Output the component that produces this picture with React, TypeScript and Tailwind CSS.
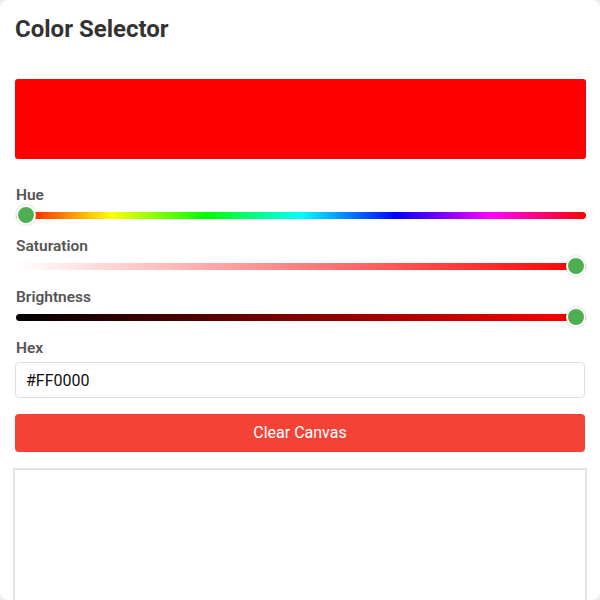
import { useState } from 'react';

const font = { fontFamily: 'Roboto, "Liberation Sans", sans-serif' };

function Slider({ track, value }: { track: string; value: number }) {
  // value is 0..1, thumb centre runs from 10px to width-10px
  return (
    <div className="relative h-5 flex items-center">
      <div className="h-[7px] w-full rounded-full" style={{ background: track }} />
      <div
        className="absolute top-0 w-5 h-5 rounded-full bg-[#4caf50] border-2 border-white shadow-[0_0_2px_rgba(0,0,0,0.25)]"
        style={{ left: `calc(${value * 100}% - ${value * 20}px)` }}
      />
    </div>
  );
}

export default function App() {
  const [hex, setHex] = useState('#FF0000');

  const sliders = [
    {
      label: 'Hue',
      track: 'linear-gradient(to right, #ff0000, #ffff00, #00ff00, #00ffff, #0000ff, #ff00ff, #ff0000)',
      value: 0,
    },
    {
      label: 'Saturation',
      track: 'linear-gradient(to right, #ffffff, #ff0000)',
      value: 1,
    },
    {
      label: 'Brightness',
      track: 'linear-gradient(to right, #000000, #ff0000)',
      value: 1,
    },
  ];

  return (
    <div className="min-h-screen bg-[#f4f4f4]" style={font}>
      <div className="h-screen overflow-hidden bg-white rounded-lg shadow-[0_0_4px_rgba(0,0,0,0.12)] pl-[15px] pr-[15px] pt-[13px]">
        <h2 className="text-[24px] leading-8 font-bold text-[#333]">Color Selector</h2>

        <div className="mt-[34px] -mr-px h-20 rounded-[3px] bg-[#ff0000]" />

        <div className="mt-[26px] ml-px -mr-px">
          {sliders.map(s => (
            <div key={s.label} className="mb-[11px]">
              <div className="text-[15.5px] leading-5 font-semibold text-[#555]">{s.label}</div>
              <Slider track={s.track} value={s.value} />
            </div>
          ))}
        </div>

        <div className="text-[15.5px] leading-5 font-semibold text-[#555] px-px">Hex</div>
        <input
          value={hex}
          onChange={e => setHex(e.target.value)}
          className="mt-1 w-full h-9 px-[10px] border border-[#ddd] rounded-[4px] text-[16px] text-[#111] outline-none"
        />

        <button className="mt-4 w-full h-[38px] rounded-[4px] bg-[#f44336] text-white text-[16px]">
          Clear Canvas
        </button>

        <div className="mt-4 -mx-[2px] h-[300px] border-2 border-[#e2e2e2] bg-white" />
      </div>
    </div>
  );
}
